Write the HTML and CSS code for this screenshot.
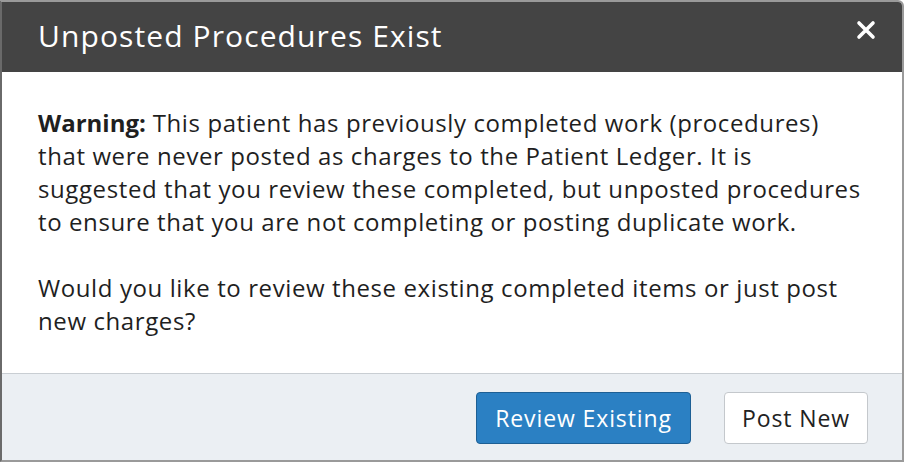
FILE: index.html
```html
<!DOCTYPE html>
<html lang="en">
<head>
<meta charset="UTF-8">
<title>Unposted Procedures Exist</title>
<link rel="stylesheet" href="styles.css">
</head>
<body>
<div class="dialog">
  <div class="dialog-header">
    <div class="dialog-title">Unposted Procedures Exist</div>
    <button type="button" class="dialog-close" aria-label="Close">
      <svg width="20" height="20" viewBox="0 0 20 20"><path d="M3 3 L17 17 M17 3 L3 17" stroke="#fff" stroke-width="3.6" stroke-linecap="round"/></svg>
    </button>
  </div>
  <div class="dialog-body">
    <p><b>Warning:</b> This patient has previously completed work (procedures) that were never posted as charges to the Patient Ledger. It is suggested that you review these completed, but unposted procedures to ensure that you are not completing or posting duplicate work.</p>
    <p>Would you like to review these existing completed items or just post new charges?</p>
  </div>
  <div class="dialog-footer">
    <button type="button" class="btn btn-primary">Review Existing</button>
    <button type="button" class="btn btn-default">Post New</button>
  </div>
</div>
</body>
</html>
```
FILE: styles.css
```css
html, body {
  margin: 0;
  padding: 0;
  background: #fff;
}
.dialog {
  box-sizing: border-box;
  width: 904px;
  height: 462px;
  display: flex;
  flex-direction: column;
  border: 2px solid #9a9a9a;
  border-left-color: #6a6a6a;
  border-radius: 0 6px 0 0;
  overflow: hidden;
  font-family: "Open Sans", "Liberation Sans", sans-serif;
  color: #1f1f1f;
}
.dialog-header {
  height: 70px;
  box-sizing: border-box;
  flex: none;
  background-color: #444444;
  display: flex;
  align-items: center;
  justify-content: space-between;
  padding: 0 24px 4px 36px;
}
.dialog-title {
  color: #fff;
  font-size: 30px;
  letter-spacing: 1.1px;
}
.dialog-close {
  background: none;
  border: 0;
  padding: 0;
  margin-top: -10px;
  width: 24px;
  height: 24px;
  display: flex;
  align-items: center;
  justify-content: center;
  cursor: pointer;
}
.dialog-body {
  flex: 1;
  min-height: 0;
  padding: 34px 36px 0;
  background: #fff;
  font-size: 24px;
  line-height: 33px;
  letter-spacing: 0.6px;
}
.dialog-body p {
  margin: 0 0 33px;
}
.dialog-body b {
  font-weight: 700;
  letter-spacing: 0;
}
.dialog-footer {
  height: 87px;
  flex: none;
  box-sizing: border-box;
  border-top: 1px solid #c9ced3;
  background: #ebeff3;
  display: flex;
  justify-content: flex-end;
  align-items: flex-start;
  gap: 33px;
  padding: 18px 34px 0 0;
}
.btn {
  height: 52px;
  padding: 0 17px;
  border-radius: 4px;
  font-family: "Open Sans", "Liberation Sans", sans-serif;
  font-size: 23px;
  letter-spacing: 0.9px;
  cursor: pointer;
}
.btn-primary {
  padding: 0 18px;
  background: #2b80c3;
  border: 1px solid #1d5f94;
  color: #fff;
}
.btn-default {
  background: #fff;
  border: 1px solid #c4c8cc;
  color: #222;
}
```
